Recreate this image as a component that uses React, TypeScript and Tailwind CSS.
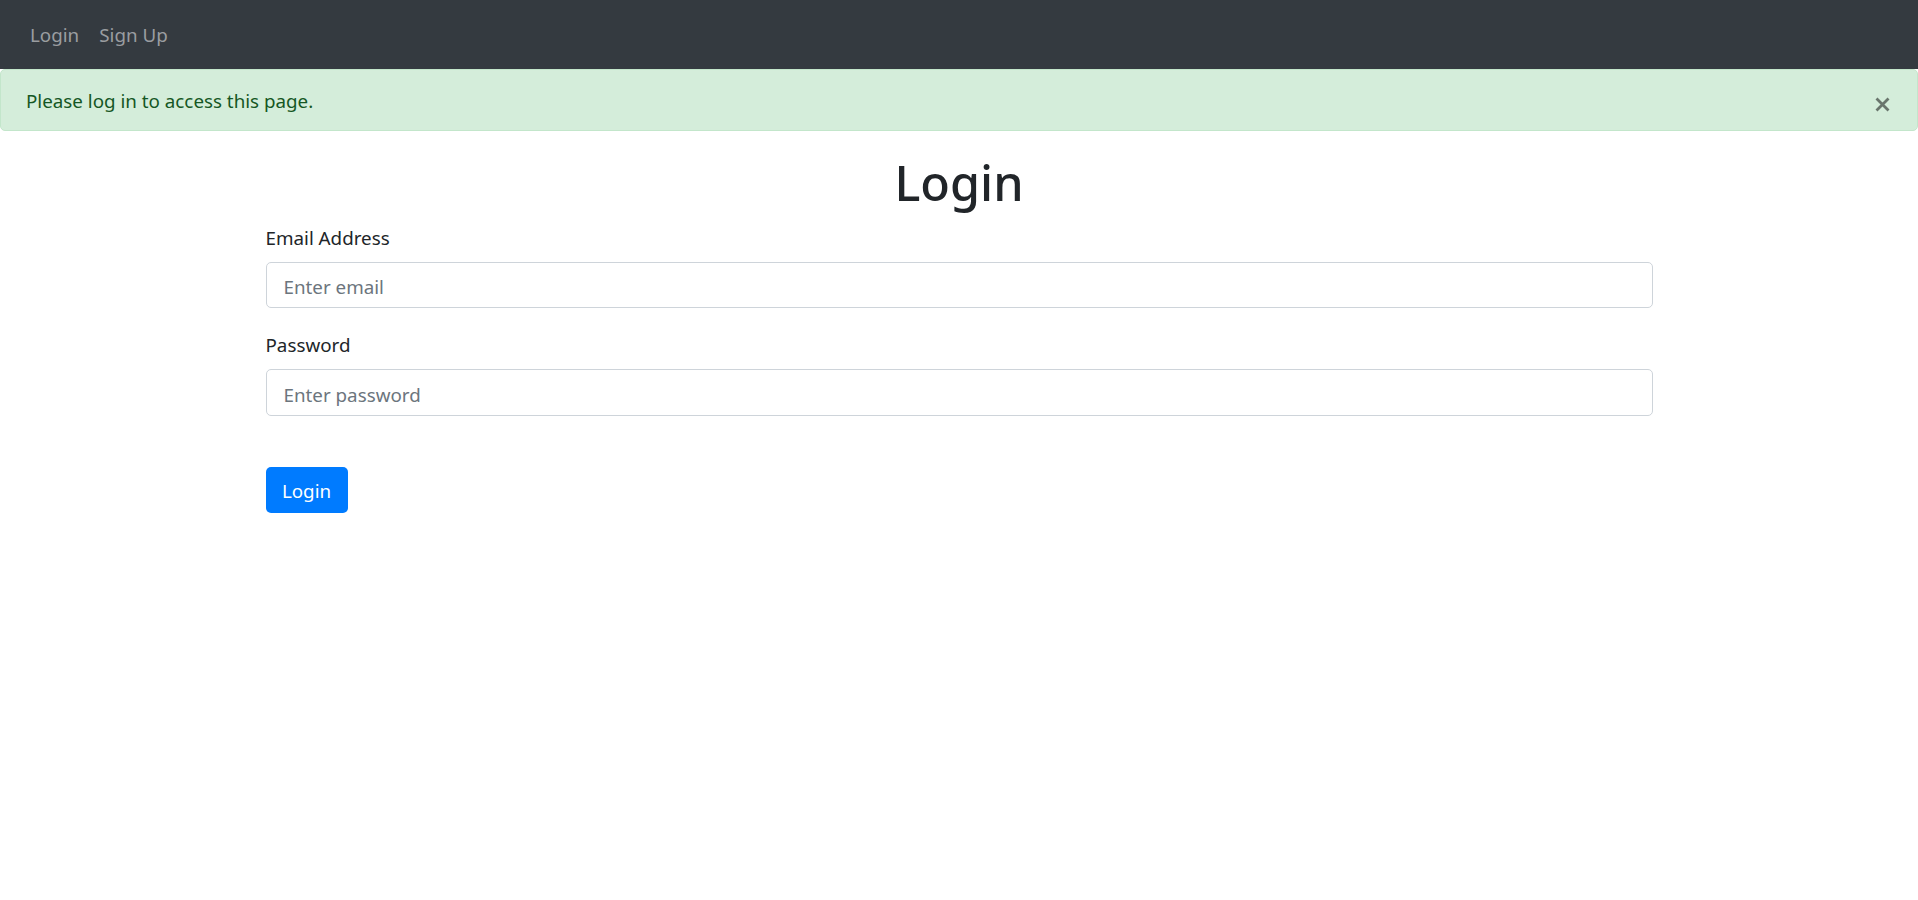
import React from "react";

export default function App() {
  const font = { fontFamily: '"Noto Sans", "Open Sans", sans-serif' };
  return (
    <div className="min-h-[900px] w-full bg-white text-[#212529]" style={font}>
      <nav className="flex h-[69px] items-center bg-[#343a40] pl-[20px] pt-[2px]">
        <a className="px-[10px] text-[18.8px] leading-[29px] text-[#9a9da0]">Login</a>
        <a className="px-[10px] text-[18.8px] leading-[29px] text-[#9a9da0]">Sign Up</a>
      </nav>
      <div className="relative flex h-[62px] items-center rounded-[5px] border border-[#c3e6cb] bg-[#d4edda] pl-[25px] pt-[2px] text-[18.8px] text-[#155724]">
        Please log in to access this page.
        <button className="absolute right-[27px] top-[27px] opacity-50" aria-label="Close">
          <svg width="15" height="15" viewBox="0 0 15 15">
            <path d="M1.5 1.5 L13.5 13.5 M13.5 1.5 L1.5 13.5" stroke="#000" strokeWidth="2.8" strokeLinecap="butt" />
          </svg>
        </button>
      </div>
      <div className="mx-auto w-[1387px]">
        <h1 className="mt-[22px] h-[59px] text-center text-[48.5px] font-medium leading-[59px]">Login</h1>
        <div className="mt-[11px]">
          <label className="block h-[29px] pt-[1px] text-[18.8px] leading-[29px]">Email Address</label>
          <input
            className="mt-[10px] block h-[46px] w-full rounded-[5px] border border-[#ced4da] pl-[17px] pt-[4px] text-[18.8px] outline-none placeholder:text-[#6c757d]"
            placeholder="Enter email"
          />
        </div>
        <div className="mt-[22px]">
          <label className="block h-[29px] pt-[1px] text-[18.8px] leading-[29px]">Password</label>
          <input
            type="password"
            className="mt-[10px] block h-[47px] w-full rounded-[5px] border border-[#ced4da] pl-[17px] pt-[4px] text-[18.8px] outline-none placeholder:text-[#6c757d]"
            placeholder="Enter password"
          />
        </div>
        <button className="mt-[51px] flex h-[46px] w-[82px] items-center justify-center rounded-[5px] bg-[#007bff] pt-[2px] text-[18.8px] text-white">
          Login
        </button>
      </div>
    </div>
  );
}
